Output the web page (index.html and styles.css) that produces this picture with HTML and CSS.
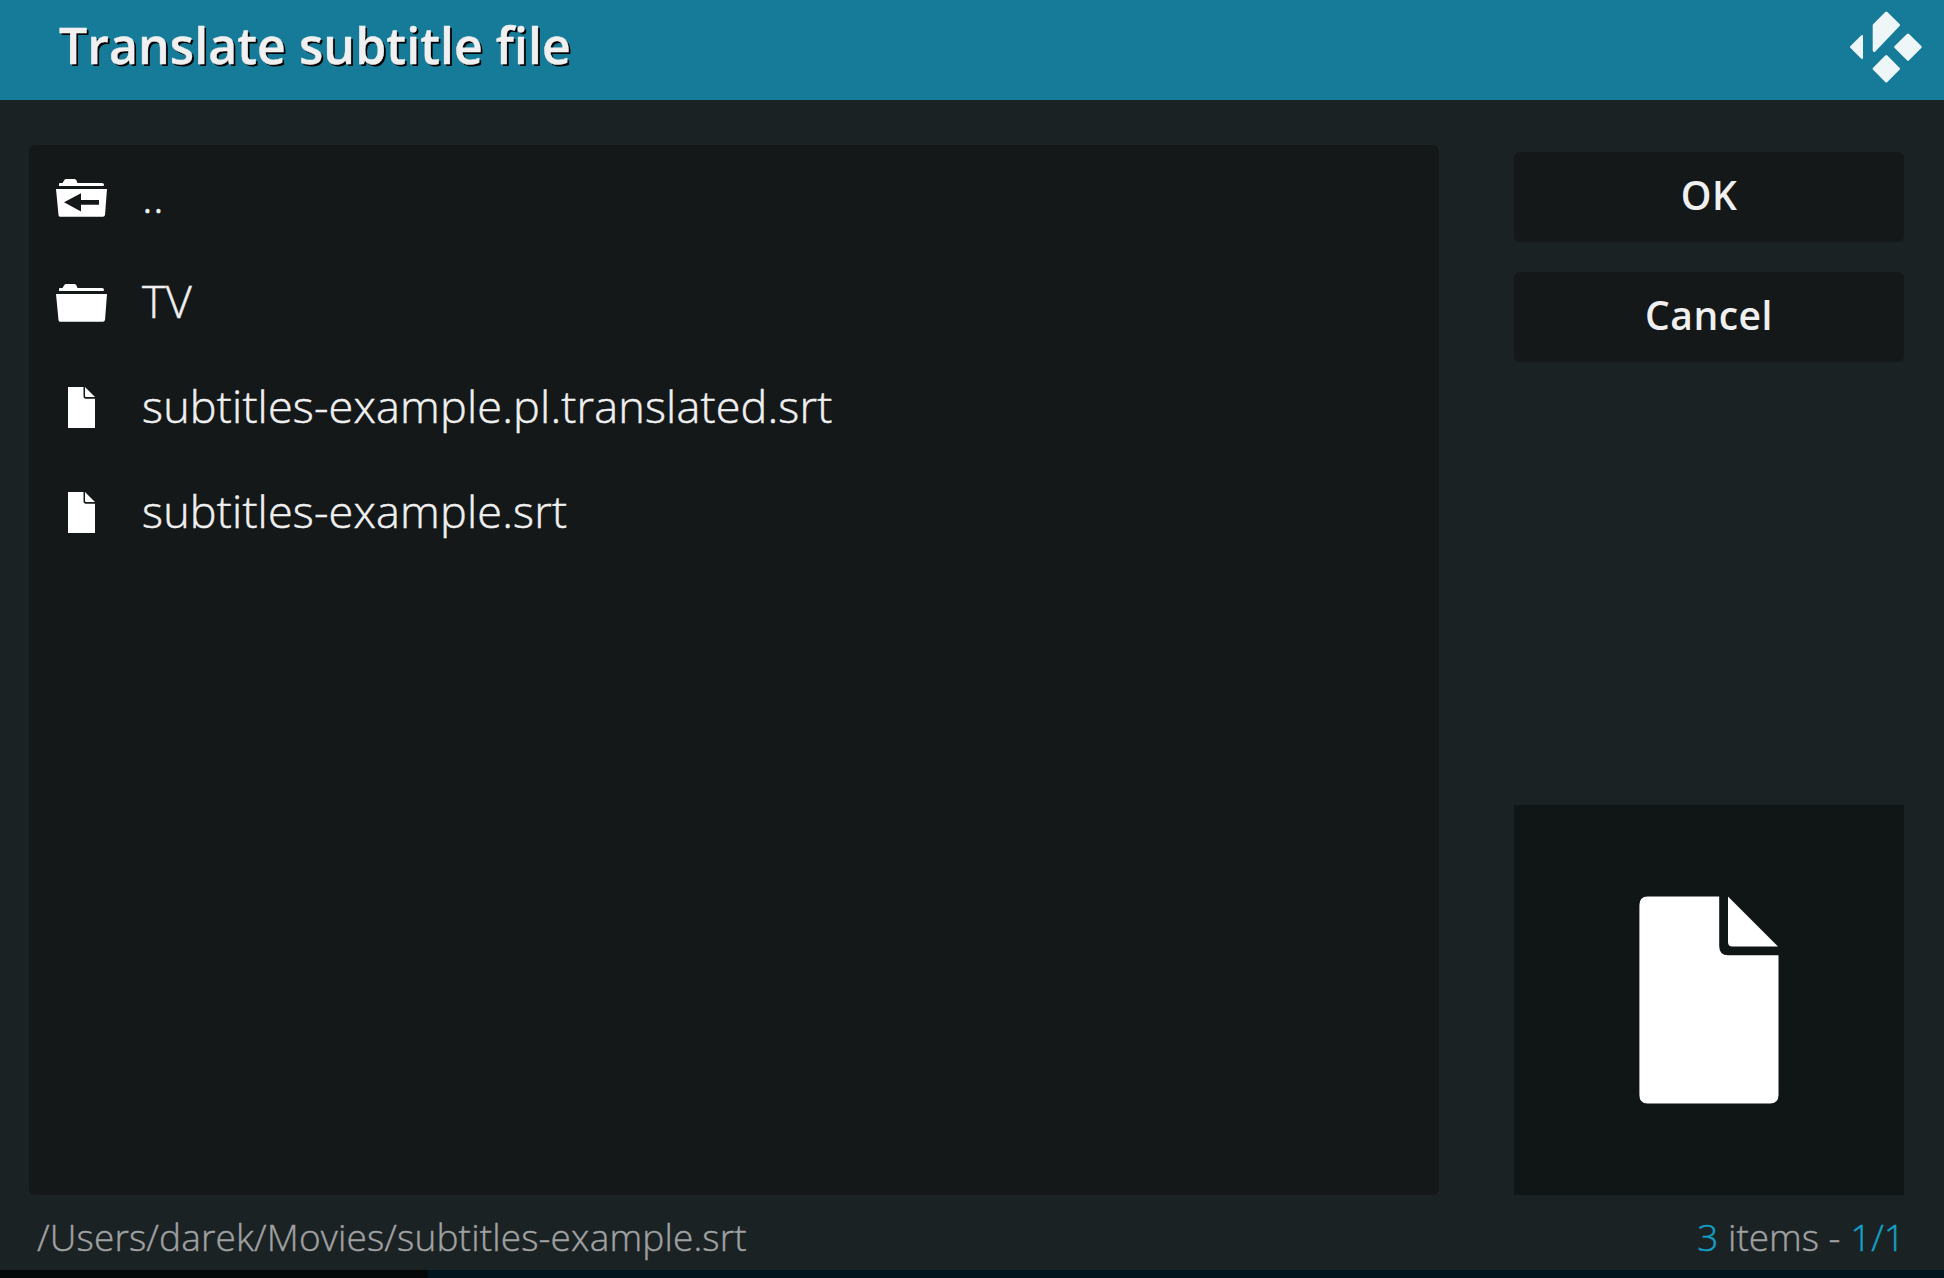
FILE: index.html
```html
<!DOCTYPE html>
<html lang="en">
<head>
<meta charset="utf-8">
<title>Translate subtitle file</title>
<link rel="stylesheet" href="styles.css">
</head>
<body>
<div class="dialog">
  <header class="header">
    <h1 class="title">Translate subtitle file</h1>
    <svg class="logo" viewBox="0 0 74 74" fill="currentColor" stroke="currentColor" stroke-width="3" stroke-linejoin="round">
      <path d="M1 38 12 27V49Z" stroke-width="2"/>
      <path d="M24.200 16.200 36.300 4 48.500 16 24.200 41.500Z"/>
      <path d="M58 26 70.200 38 58 50.200 45.700 38Z"/>
      <path d="M36.300 47.500 48.400 59.700 36.300 71.900 24.200 59.700Z"/>
    </svg>
  </header>
  <main class="content">
    <ul class="list">
      <li class="row">
        <svg class="icon" viewBox="0 0 80 105"><path fill="#fff" fill-rule="evenodd" d="M30 41V39Q30 38 31 38H33.500L35 35.500Q35.500 34 37 34H45.500Q47 34 47.500 35.500L48.500 38H73Q75 38 75 39.500Q75 41 74 41ZM27 44H78L76 70Q75.500 71.700 74 71.700H31Q29.500 71.700 29.500 70ZM35 57.300 52 66.500V59.700H70V55H52V48.300Z"/></svg>
        <span class="name">..</span>
      </li>
      <li class="row">
        <svg class="icon" viewBox="0 0 80 105"><path fill="#fff" d="M30 41V39Q30 38 31 38H33.500L35 35.500Q35.500 34 37 34H45.500Q47 34 47.500 35.500L48.500 38H73Q75 38 75 39.500Q75 41 74 41ZM27 44H78L76 70Q75.500 71.700 74 71.700H31Q29.500 71.700 29.500 70Z"/></svg>
        <span class="name">TV</span>
      </li>
      <li class="row">
        <svg class="icon" viewBox="0 0 80 105"><path fill="#fff" d="M39 32H54.500V41Q54.500 43.800 57 43.800H66V73H39ZM56 32 66 42H57Q56 42 56 41Z"/></svg>
        <span class="name">subtitles-example.pl.translated.srt</span>
      </li>
      <li class="row">
        <svg class="icon" viewBox="0 0 80 105"><path fill="#fff" d="M39 32H54.500V41Q54.500 43.800 57 43.800H66V73H39ZM56 32 66 42H57Q56 42 56 41Z"/></svg>
        <span class="name">subtitles-example.srt</span>
      </li>
    </ul>
    <aside class="side">
      <div class="buttons">
        <button class="button">OK</button>
        <button class="button">Cancel</button>
      </div>
      <div class="preview">
        <svg class="file" viewBox="0 0 140 208" fill="#fff"><path d="M8.500 .4H80.200V50Q80.200 59.300 89 59.300H139.500V199Q139.500 207.500 131 207.500H8.500Q.4 207.500 .4 199V9Q.4 .4 8.500 .4ZM89 .5 139 50.500H93.500Q89 50.500 89 46Z"/></svg>
      </div>
    </aside>
  </main>
  <footer class="footer">
    <span class="path">/Users/darek/Movies/subtitles-example.srt</span>
    <span class="count"><b class="num">3</b> items - <b class="num">1/1</b></span>
  </footer>
</div>
<div class="backdrop"><div class="backdrop-dark"></div></div>
</body>
</html>
```
FILE: styles.css
```css
* { box-sizing: border-box; }

body {
  margin: 0;
  width: 1944px;
  height: 1278px;
  overflow: hidden;
  background: #1b2224;
  color: #f0f0f0;
  font-family: "Open Sans", "Noto Sans", sans-serif;
}

.dialog { display: flex; flex-direction: column; height: 1270px; }

.header {
  display: flex;
  justify-content: space-between;
  height: 100px;
  padding: 9px 20px 0 59px;
  background: #167b98;
}

.title {
  margin: 0;
  font-size: 50px;
  font-weight: 600;
  line-height: 72px;
  letter-spacing: .05px;
  -webkit-text-stroke: .4px #f0f0f0;
  text-shadow: 2px 2px 0 #000;
}

.logo { width: 74px; height: 74px; color: #eef6f8; }

.content {
  display: flex;
  justify-content: space-between;
  height: 1095px;
  padding: 45px 40px 0 29px;
}

.list {
  width: 1410px;
  margin: 0;
  padding: 0;
  list-style: none;
  background: #141819;
  border-radius: 6px;
}

.row { display: flex; height: 105px; }

.icon { flex: none; width: 80px; height: 105px; }

.name {
  margin-left: 33px;
  font-size: 45px;
  font-weight: 300;
  line-height: 101px;
  letter-spacing: .17px;
  -webkit-text-stroke: .5px #f0f0f0;
}

.side {
  display: flex;
  flex-direction: column;
  justify-content: space-between;
  width: 390px;
  padding-top: 7px;
}

.buttons { display: flex; flex-direction: column; gap: 30px; }

.button {
  height: 90px;
  padding: 0 0 6px;
  border: 0;
  border-radius: 6px;
  background: #141819;
  color: inherit;
  font: 600 39px "Open Sans", "Noto Sans", sans-serif;
  letter-spacing: .5px;
}

.preview {
  display: flex;
  align-items: center;
  justify-content: center;
  height: 390px;
  background: #101616;
}

.file { width: 140px; height: 208px; }

.footer {
  display: flex;
  justify-content: space-between;
  height: 75px;
  padding: 0 39px 0 37px;
  color: #a0a1a2;
  font-size: 37px;
  font-weight: 300;
  line-height: 84px;
  -webkit-text-stroke: .4px currentColor;
}

.path { letter-spacing: .15px; }

.num { color: #12a0c7; font-weight: 300; }

.backdrop { height: 8px; background: #00151d; }

.backdrop-dark { width: 428px; height: 8px; background: #050809; }
```
